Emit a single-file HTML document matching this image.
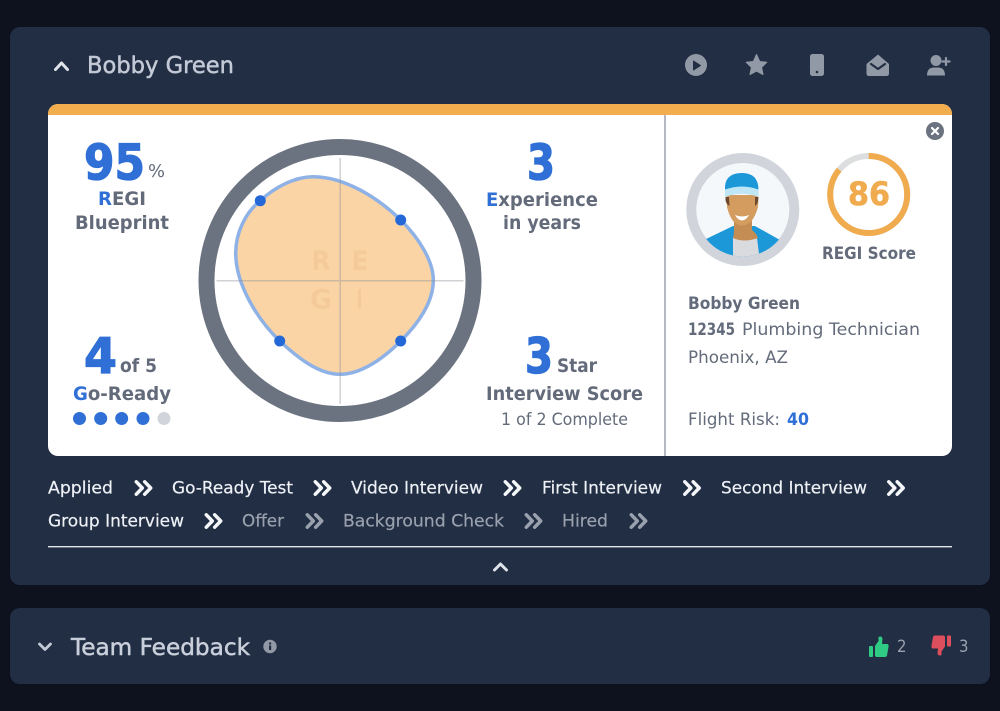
<!DOCTYPE html>
<html lang="en">
<head>
<meta charset="utf-8">
<title>Bobby Green</title>
<style>
html,body{margin:0;padding:0;background:#0e121e;width:1000px;height:711px;overflow:hidden}
svg{display:block}
text{font-family:"DejaVu Sans","Liberation Sans",sans-serif}
.b{font-weight:700}
.g{fill:#636b7b}
.bl{fill:#2f6fd6}
.big{fill:#2f6fd6;stroke:#2f6fd6;stroke-width:1.300px}
.w{fill:#eef1f6;font-size:17px;stroke:#eef1f6;stroke-width:.2px}
.m{fill:#9aa1ae;font-size:17px;stroke:#9aa1ae;stroke-width:.2px}
.d{fill:#636b7b;font-size:17px}
.h{stroke-width:.5px}
</style>
</head>
<body>
<svg width="1000" height="711" viewBox="0 0 1000 711" xmlns="http://www.w3.org/2000/svg">
<defs>
<clipPath id="av"><circle cx="742.8" cy="209.5" r="47"/></clipPath>
<clipPath id="top"><rect x="48" y="104" width="904" height="11"/></clipPath>
<g id="chev" fill="none" stroke-width="3.5" stroke-linecap="round" stroke-linejoin="round">
<path d="M1.8 1.8 L7.8 8 L1.8 14.2"/><path d="M10.2 1.8 L16.2 8 L10.2 14.2"/>
</g>
</defs>

<rect width="1000" height="711" fill="#0e121e"/>
<rect x="10" y="27" width="980" height="558" rx="10" fill="#222e43"/>
<rect x="10" y="608" width="980" height="76" rx="10" fill="#222e43"/>

<!-- header -->
<path d="M55.500 69.500 L61.500 63 L67.500 69.500" fill="none" stroke="#dfe3ea" stroke-width="3" stroke-linecap="round" stroke-linejoin="round"/>
<text x="87" y="73" font-size="23" fill="#c3c9d6" stroke="#c3c9d6" class="h" textLength="147" lengthAdjust="spacingAndGlyphs">Bobby Green</text>

<!-- header icons -->
<g fill="#9299a6">
<circle cx="696" cy="65" r="11"/>
<path d="M693.500 61 L700.500 65.500 L693.500 70 Z" fill="#222e43" stroke="#222e43" stroke-width="1" stroke-linejoin="round"/>
<path d="M756.500 54.500 L759.700 61.500 L766.800 62.300 L761.600 67.300 L763 74.500 L756.500 71 L750 74.500 L751.400 67.300 L746.200 62.300 L753.300 61.500 Z" stroke="#9299a6" stroke-width="1" stroke-linejoin="round"/>
<rect x="810" y="54" width="14" height="22" rx="2.500"/>
<circle cx="817" cy="72" r="1.300" fill="#222e43"/>
<path d="M866.500 64 L878 54.500 L889 64 L889 73.500 Q889 76 886.500 76 L869 76 Q866.500 76 866.500 73.500 Z"/>
<path d="M871 64 L878 69 L885 64" fill="none" stroke="#222e43" stroke-width="2.200" stroke-linecap="round" stroke-linejoin="round"/>
<circle cx="936" cy="60.500" r="5.500"/>
<path d="M927 75.500 Q927 67.500 934 67.500 L938 67.500 Q945 67.500 945 75.500 Z"/>
<path d="M946 58 V65 M942.500 61.500 H949.500" stroke="#9299a6" stroke-width="2.200" stroke-linecap="round"/>
</g>

<!-- card -->
<rect x="48" y="104" width="904" height="352" rx="10" fill="#ffffff"/>
<rect x="48" y="104" width="904" height="30" rx="10" fill="#f2ad4e" clip-path="url(#top)"/>
<rect x="664.500" y="115" width="1" height="341" fill="#6b7280"/>
<circle cx="935" cy="131" r="9" fill="#6b7280"/>
<path d="M932 128 L938 134 M938 128 L932 134" stroke="#fff" stroke-width="2.200" stroke-linecap="round"/>

<!-- left stats -->
<text x="84" y="179.500" font-size="49" class="b big" textLength="61" lengthAdjust="spacingAndGlyphs">95</text>
<text x="148" y="177" font-size="18" class="g" textLength="17" lengthAdjust="spacingAndGlyphs">%</text>
<text x="98" y="205" font-size="19" class="b g" textLength="48" lengthAdjust="spacingAndGlyphs"><tspan style="fill:#2f6fd6">R</tspan>EGI</text>
<text x="75" y="229" font-size="19" class="b g" textLength="94" lengthAdjust="spacingAndGlyphs">Blueprint</text>

<text x="84" y="373" font-size="49" class="b big" textLength="33" lengthAdjust="spacingAndGlyphs">4</text>
<text x="120" y="372" font-size="19" class="b g" textLength="37" lengthAdjust="spacingAndGlyphs">of 5</text>
<text x="73" y="400" font-size="19" class="b g" textLength="98" lengthAdjust="spacingAndGlyphs"><tspan style="fill:#2f6fd6">G</tspan>o-Ready</text>
<g fill="#2f6fd6">
<circle cx="79.500" cy="418.500" r="6.500"/><circle cx="100.700" cy="418.500" r="6.500"/><circle cx="121.700" cy="418.500" r="6.500"/><circle cx="143" cy="418.500" r="6.500"/>
</g>
<circle cx="164" cy="418.500" r="6.500" fill="#d1d5db"/>

<!-- radar -->
<circle cx="340" cy="280.500" r="133.500" fill="#fff" stroke="#6b7280" stroke-width="16"/>
<path d="M313 176.700 C345 176.700 378 198 400.700 220 C420 239 433.300 262 433.300 280 C433.500 302 418 324 400.700 341 C385 357 362 374.300 340 374.300 C318 374.300 297 357 279.700 341 C258 320 235.700 285 235.700 253 C235.700 232 246 212 260.300 200.700 C275 187 295 176.700 313 176.700 Z" fill="#fbd4a5" stroke="#8fb2e6" stroke-width="3.500"/>
<path d="M216.500 280.700 H463.500 M340.200 158 V404" stroke="#8a8f99" stroke-opacity=".4" stroke-width="1.500" fill="none"/>
<g font-size="27" class="b" fill="#f4ca9b">
<text x="311.500" y="270" textLength="19" lengthAdjust="spacingAndGlyphs">R</text>
<text x="351.500" y="270" textLength="17" lengthAdjust="spacingAndGlyphs">E</text>
<text x="310" y="308.500" textLength="22" lengthAdjust="spacingAndGlyphs">G</text>
<text x="356.500" y="308.500" textLength="6" lengthAdjust="spacingAndGlyphs">I</text>
</g>
<g fill="#2468d8">
<circle cx="260.300" cy="200.700" r="5.500"/><circle cx="400.700" cy="220" r="5.500"/><circle cx="400.700" cy="341" r="5.500"/><circle cx="279.700" cy="341" r="5.500"/>
</g>

<!-- right stats -->
<text x="527" y="179.500" font-size="49" class="b big" textLength="28" lengthAdjust="spacingAndGlyphs">3</text>
<text x="486" y="206" font-size="19" class="b g" textLength="112" lengthAdjust="spacingAndGlyphs"><tspan style="fill:#2f6fd6">E</tspan>xperience</text>
<text x="503" y="229" font-size="19" class="b g" textLength="78" lengthAdjust="spacingAndGlyphs">in years</text>
<text x="525" y="373" font-size="49" class="b big" textLength="28" lengthAdjust="spacingAndGlyphs">3</text>
<text x="557" y="372" font-size="19" class="b g" textLength="40" lengthAdjust="spacingAndGlyphs">Star</text>
<text x="486" y="400" font-size="19" class="b g" textLength="157" lengthAdjust="spacingAndGlyphs">Interview Score</text>
<text x="501" y="425" font-size="17" class="g" textLength="127" lengthAdjust="spacingAndGlyphs">1 of 2 Complete</text>

<!-- avatar -->
<circle cx="742.800" cy="209.500" r="51.500" fill="#f5f8fb" stroke="#d1d5db" stroke-width="10"/>
<g clip-path="url(#av)">
<path d="M704 240 L733 226 L755 226 L780 240 L780 262 L704 262 Z" fill="#1c98d9"/>
<path d="M733 238 L757 238 L760 262 L733 262 Z" fill="#d9dbdf"/>
<path d="M734 214 L752 214 L752 230 Q757 234 758 238 Q744 243 733 238 L734 232 Z" fill="#c48d54"/>
<path d="M726.500 195 L758.500 195 L758 207 Q753 225.500 742 225.500 Q731.500 225.500 727 207 Z" fill="#d49c5f"/>
<path d="M725.500 197 L729 197 L729.500 206 Q726 204 725.500 200 Z M755 197 L758.500 197 L758 201 Q757.500 204 755 206 Z" fill="#6d4a2e"/>
<path d="M725 190 Q724 173.500 741 173 Q758.500 172.500 758.500 190 L758.500 194 Q742 187 725 194 Z" fill="#1c98d9"/>
<path d="M725 189.500 Q742 183.500 758.500 189.500 L758.500 197 Q742 190.500 725 197 Z" fill="#bfe6f5"/>
<path d="M735 215 Q742 218 749 215 Q746 220.500 742 220.500 Q738 220.500 735 215 Z" fill="#fff"/>
</g>

<!-- score -->
<circle cx="868.700" cy="194.500" r="38.500" fill="none" stroke="#dcdedf" stroke-width="6"/>
<circle cx="868.700" cy="194.500" r="38.500" fill="none" stroke="#f0ab4f" stroke-width="6" stroke-dasharray="208 242" transform="rotate(-90 868.700 194.500)"/>
<text x="848" y="205" font-size="32" class="b" fill="#f0ab4f" stroke="#f0ab4f" stroke-width=".6" textLength="42" lengthAdjust="spacingAndGlyphs">86</text>
<text x="822" y="259" font-size="16.500" class="b g" textLength="94" lengthAdjust="spacingAndGlyphs">REGI Score</text>

<text x="688" y="309" font-size="17" class="b g" textLength="112" lengthAdjust="spacingAndGlyphs">Bobby Green</text>
<text x="688" y="335" font-size="17" class="b g" textLength="47" lengthAdjust="spacingAndGlyphs">12345</text>
<text x="742" y="335" class="d" textLength="178" lengthAdjust="spacingAndGlyphs">Plumbing Technician</text>
<text x="688" y="363" class="d" textLength="100" lengthAdjust="spacingAndGlyphs">Phoenix, AZ</text>
<text x="688" y="425" class="d" textLength="92" lengthAdjust="spacingAndGlyphs">Flight Risk:</text>
<text x="787" y="425" font-size="17" class="b bl" textLength="22" lengthAdjust="spacingAndGlyphs">40</text>

<!-- steps -->
<text x="48" y="493.500" class="w" textLength="65" lengthAdjust="spacingAndGlyphs">Applied</text>
<use href="#chev" x="134.500" y="480" stroke="#f4f6f9"/>
<text x="172" y="493.500" class="w" textLength="121" lengthAdjust="spacingAndGlyphs">Go-Ready Test</text>
<use href="#chev" x="313.500" y="480" stroke="#f4f6f9"/>
<text x="351" y="493.500" class="w" textLength="132" lengthAdjust="spacingAndGlyphs">Video Interview</text>
<use href="#chev" x="503.500" y="480" stroke="#f4f6f9"/>
<text x="542" y="493.500" class="w" textLength="120" lengthAdjust="spacingAndGlyphs">First Interview</text>
<use href="#chev" x="683" y="480" stroke="#f4f6f9"/>
<text x="721" y="493.500" class="w" textLength="146" lengthAdjust="spacingAndGlyphs">Second Interview</text>
<use href="#chev" x="887" y="480" stroke="#f4f6f9"/>

<text x="48" y="526.500" class="w" textLength="136" lengthAdjust="spacingAndGlyphs">Group Interview</text>
<use href="#chev" x="204.500" y="513" stroke="#f4f6f9"/>
<text x="242" y="526.500" class="m" textLength="42" lengthAdjust="spacingAndGlyphs">Offer</text>
<use href="#chev" x="305.500" y="513" stroke="#9aa1ae"/>
<text x="343" y="526.500" class="m" textLength="161" lengthAdjust="spacingAndGlyphs">Background Check</text>
<use href="#chev" x="524.500" y="513" stroke="#9aa1ae"/>
<text x="562" y="526.500" class="m" textLength="46" lengthAdjust="spacingAndGlyphs">Hired</text>
<use href="#chev" x="629.500" y="513" stroke="#9aa1ae"/>

<rect x="48" y="546" width="904" height="1.400" fill="#dfe3ea"/>
<path d="M494.500 570 L500.500 564 L506.500 570" fill="none" stroke="#dfe3ea" stroke-width="3" stroke-linecap="round" stroke-linejoin="round"/>

<!-- team feedback -->
<path d="M39.500 644 L45 649.500 L50.500 644" fill="none" stroke="#c3c9d6" stroke-width="2.800" stroke-linecap="round" stroke-linejoin="round"/>
<text x="71" y="655" font-size="23" fill="#c9cfdb" stroke="#c9cfdb" class="h" textLength="179" lengthAdjust="spacingAndGlyphs">Team Feedback</text>
<circle cx="270" cy="646.500" r="6.700" fill="#9299a6"/>
<rect x="269" y="645.500" width="2.200" height="4.500" fill="#222e43"/>
<rect x="269" y="642.500" width="2.200" height="2" fill="#222e43"/>

<rect x="869" y="646" width="4" height="11" rx="1" fill="#2fcb85"/>
<path d="M875 646 L878.500 641 L878.500 637 Q881.500 635.500 882.500 638.500 L882 644 L887.500 644 Q889 645 888.500 647 L887 655.500 Q886.500 657 885 657 L877 657 Q875 657 875 655 Z" fill="#2fcb85"/>
<text x="897" y="652" font-size="17" fill="#9aa1ae" textLength="9.500" lengthAdjust="spacingAndGlyphs">2</text>
<rect x="947" y="635.500" width="4" height="11" rx="1" fill="#dd4f5c"/>
<path d="M945 646.500 L941.500 651.500 L941.500 655 Q938.500 656.500 937.500 653.500 L938 648.500 L932.500 648.500 Q931 647.500 931.500 645.500 L933 637 Q933.500 635.500 935 635.500 L943 635.500 Q945 635.500 945 637.500 Z" fill="#dd4f5c"/>
<text x="959" y="652" font-size="17" fill="#9aa1ae" textLength="9.500" lengthAdjust="spacingAndGlyphs">3</text>
</svg>
</body>
</html>
